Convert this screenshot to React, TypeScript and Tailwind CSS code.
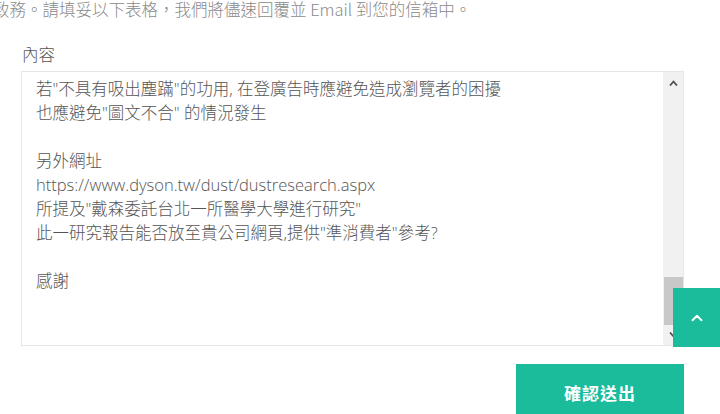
import { ChevronUp } from "lucide-react"

const lines = [
    "若\"不具有吸出塵蹣\"的功用, 在登廣告時應避免造成瀏覽者的困擾",
    "也應避免\"圖文不合\" 的情況發生",
    "",
    "另外網址",
    "https://www.dyson.tw/dust/dustresearch.aspx",
    "所提及\"戴森委託台北一所醫學大學進行研究\"",
    "此一研究報告能否放至貴公司網頁,提供\"準消費者\"參考?",
    "",
    "感謝",
]

function ScrollArrow({ down }: { down?: boolean }) {
    return (
        <svg width="9" height="6" viewBox="0 0 9 6" className={down ? "rotate-180" : ""}>
            <path d="M1 5.5 L4.5 1.5 L8 5.5" fill="none" stroke="#505050" strokeWidth="1.8" />
        </svg>
    )
}

export default function App() {
    return (
        <div
            lang="zh-TW"
            className="relative h-[414px] w-[720px] overflow-hidden bg-white"
            style={{ fontFamily: '"Open Sans", "Noto Sans CJK TC", sans-serif' }}
        >
            <p
                className="-mt-[3px] -ml-[7px] whitespace-nowrap text-[16.5px] font-light leading-[24px] text-[#8a8a8a]"
                style={{ fontFamily: '"Noto Sans CJK TC", "Open Sans", sans-serif' }}
            >
                致務。請填妥以下表格，我們將儘速回覆並 Email 到您的信箱中。
            </p>

            <div className="ml-[22px] mt-[22px] text-[16.5px] font-light leading-[24px] text-[#555]">內容</div>

            <div className="ml-[21px] mt-[4px] flex h-[275px] w-[663px] border border-[#e6e6e6]">
                <div className="flex-1 overflow-hidden pl-[14px] pt-[5px] text-[16.5px] font-light leading-[24px] text-[#555]">
                    {lines.map((line, i) => (
                        <div key={i} className="h-[24px] whitespace-nowrap">{line}</div>
                    ))}
                </div>
                <div className="flex w-[20px] flex-col items-center bg-[#f1f1f1]">
                    <div className="flex h-[20px] w-full items-center justify-center pt-[2px]">
                        <ScrollArrow />
                    </div>
                    <div className="mt-[185px] h-[48px] w-[19px] bg-[#c8c8c8]" />
                    <div className="flex h-[20px] w-full items-center justify-center">
                        <ScrollArrow down />
                    </div>
                </div>
            </div>

            <div className="ml-[516px] mt-[18px]">
                <button className="h-[60px] w-[168px] bg-[#1abc9c] text-[17px] font-bold tracking-[1px] text-white">
                    確認送出
                </button>
            </div>

            <button className="absolute right-0 top-[288px] flex h-[59px] w-[47px] items-center justify-center bg-[#1abc9c]">
                <ChevronUp className="h-[18px] w-[18px] text-white" strokeWidth={2.5} />
            </button>
        </div>
    )
}
